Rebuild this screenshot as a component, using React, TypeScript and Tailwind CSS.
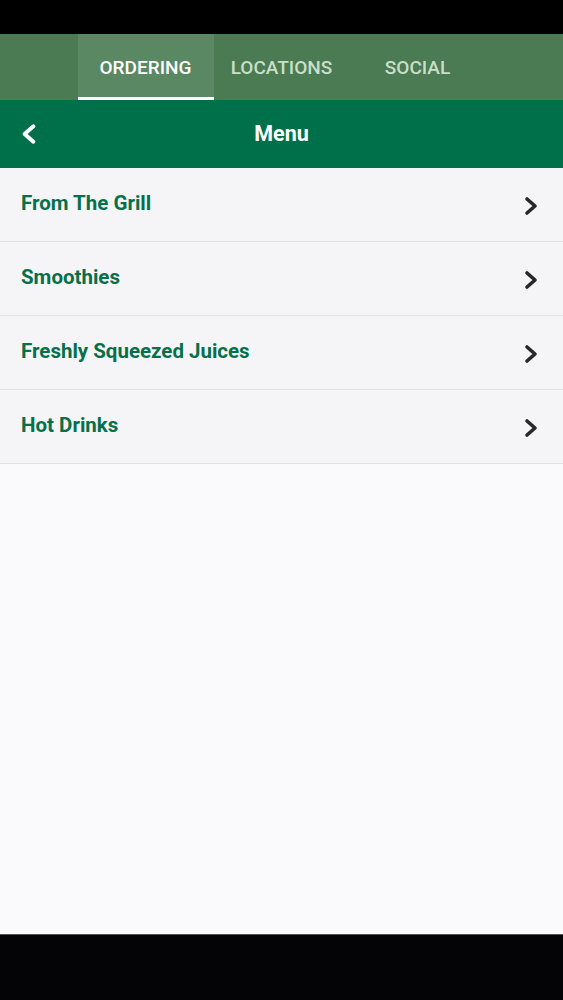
import React from 'react';

const tabs = ['ORDERING', 'LOCATIONS', 'SOCIAL'];
const items = ['From The Grill', 'Smoothies', 'Freshly Squeezed Juices', 'Hot Drinks'];

function Chevron({ dir, className }: { dir: 'left' | 'right'; className?: string }) {
  return (
    <svg viewBox="0 0 14 20" className={className} fill="none" stroke="currentColor" strokeWidth="3.6" strokeLinecap="round" strokeLinejoin="round">
      {dir === 'right' ? <polyline points="3,3 11,10 3,17" /> : <polyline points="11,3 3,10 11,17" />}
    </svg>
  );
}

export default function App() {
  return (
    <div className="w-[563px] h-[1000px] flex flex-col bg-black" style={{ fontFamily: 'Roboto, "Noto Sans", sans-serif' }}>
      {/* status bar */}
      <div className="h-[34px] bg-black" />

      {/* Tabs */}
      <nav className="h-[66px] bg-[#4a7b52] flex justify-center">
        {tabs.map((tab, i) => (
          <div
            key={tab}
            className={
              i === 0
                ? 'w-[136px] flex items-center justify-center bg-[#5a8862] text-white text-[19px] font-medium border-b-[3px] border-white pt-[6px]'
                : 'w-[136px] flex items-center justify-center text-[#c9dfc9] text-[19px] font-medium pt-[2px]'
            }
          >
            {tab}
          </div>
        ))}
      </nav>

      {/* Header */}
      <header className="h-[68px] bg-[#00704a] flex items-center px-[21px] relative">
        <Chevron dir="left" className="text-white w-[16px] h-[22px]" />
        <span className="absolute left-0 right-0 text-center text-white text-[21.5px] font-bold pointer-events-none">Menu</span>
      </header>

      {/* List */}
      <main className="flex-1 bg-[#faf9fb] flex flex-col">
        {items.map(item => (
          <div key={item} className="h-[74px] flex items-center justify-between pl-[21px] pr-[25px] bg-[#f5f5f7] border-b border-[#e2e2e4]">
            <span className="text-[#07704a] text-[20.5px] font-bold -mt-[2px]">{item}</span>
            <Chevron dir="right" className="text-[#28282a] w-[14px] h-[20px] mt-[2px]" />
          </div>
        ))}
      </main>

      {/* nav bar */}
      <div className="h-[66px] bg-[#040305] border-t border-[#55535a]" />
    </div>
  );
}
